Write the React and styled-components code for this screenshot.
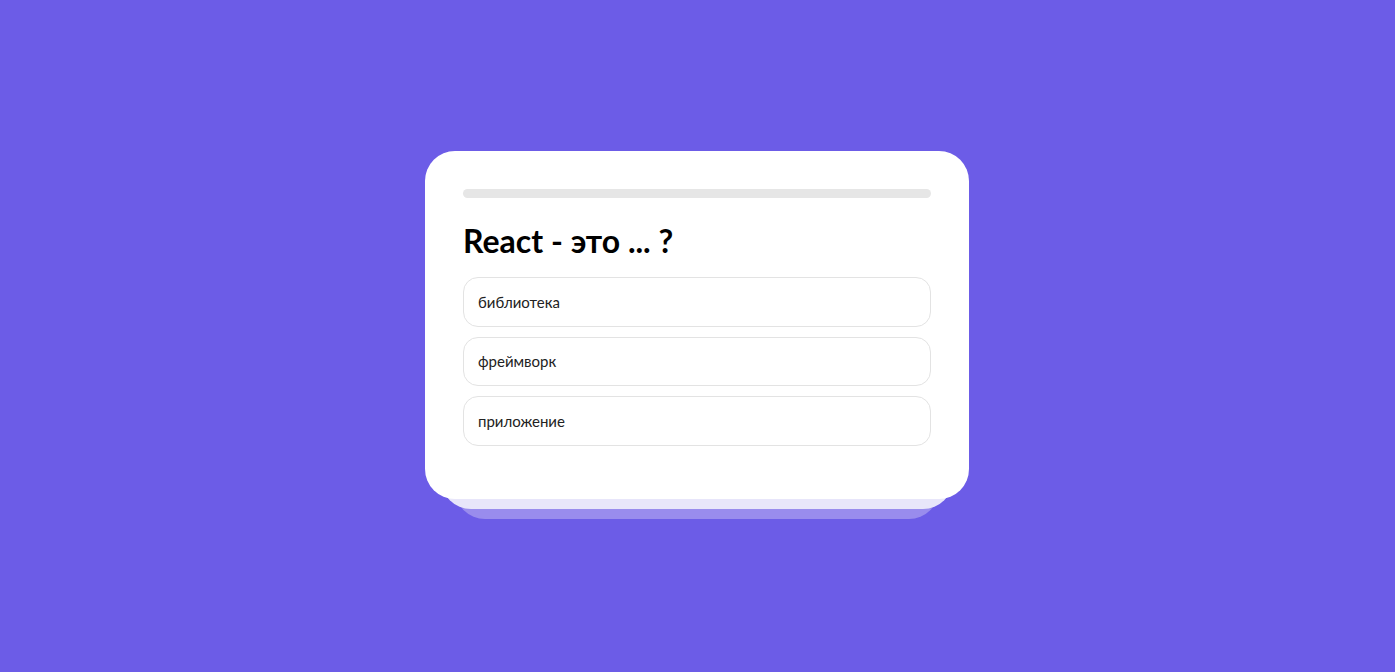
import React, { useState } from 'react'
import styled, { createGlobalStyle } from 'styled-components'

const GlobalStyle = createGlobalStyle`
  * {
    box-sizing: border-box;
  }
  body {
    margin: 0;
    background-color: #6c5ce7;
    font-family: Lato, "Noto Sans", sans-serif;
  }
`

const Page = styled.div`
  min-height: 100vh;
  display: flex;
  justify-content: center;
  align-items: flex-start;
  padding-top: 151px;
  padding-right: 1px;
`

const Stack = styled.div`
  position: relative;
  isolation: isolate;
  width: 544px;

  &::before,
  &::after {
    content: '';
    position: absolute;
    border-radius: 30px;
    height: 80px;
  }
  &::before {
    left: 16px;
    right: 16px;
    bottom: -10px;
    background-color: #e8e6fa;
    z-index: -1;
  }
  &::after {
    left: 30px;
    right: 30px;
    bottom: -20px;
    background-color: #998ced;
    z-index: -2;
  }
`

const Card = styled.div`
  position: relative;
  background-color: #fff;
  border-radius: 30px;
  padding: 38px 38px 53px;
`

const Progress = styled.div`
  height: 9px;
  border-radius: 10px;
  background-color: #e6e6e6;
  overflow: hidden;
`

const ProgressFill = styled.div`
  height: 100%;
  background-color: #6c5ce7;
`

const Title = styled.h1`
  margin: 23px 0 17px;
  font-size: 32px;
  line-height: 39px;
  font-weight: 700;
  color: #000;
`

const Options = styled.ul`
  list-style: none;
  margin: 0;
  padding: 0;
  display: flex;
  flex-direction: column;
  gap: 10px;
`

const Option = styled.li`
  height: 49.5px;
  display: flex;
  align-items: center;
  padding: 0 14px;
  border: 1px solid #e3e3e3;
  border-radius: 15px;
  font-size: 15px;
  color: #222;
  cursor: pointer;

  &:hover {
    border-color: #c9c9c9;
  }
`

const question = {
  title: 'React - это ... ?',
  variants: ['библиотека', 'фреймворк', 'приложение'],
}

const App = () => {
  const [step, setStep] = useState(0)
  const percent = Math.round((step / 3) * 100)

  return (
    <Page>
      <GlobalStyle />
      <Stack>
        <Card>
          <Progress>
            <ProgressFill style={{ width: `${percent}%` }} />
          </Progress>
          <Title>{question.title}</Title>
          <Options>
            {question.variants.map((text) => (
              <Option key={text} onClick={() => setStep((prev) => prev)}>
                {text}
              </Option>
            ))}
          </Options>
        </Card>
      </Stack>
    </Page>
  )
}

export default App
